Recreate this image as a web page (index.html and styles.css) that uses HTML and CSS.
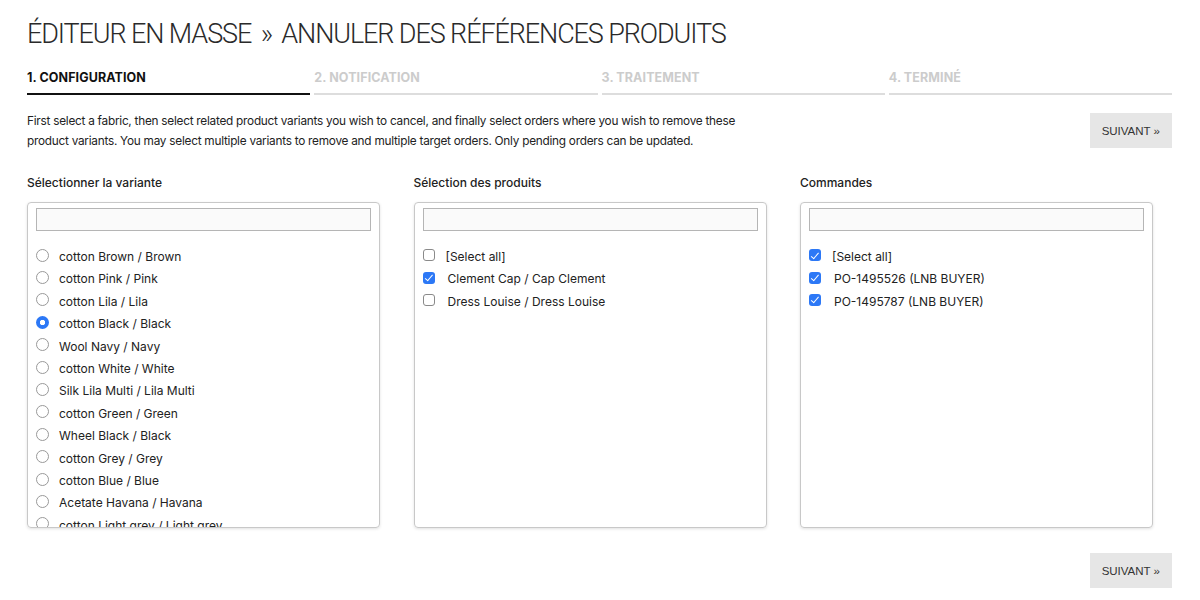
FILE: index.html
```html
<!DOCTYPE html>
<html lang="fr">
<head>
  <meta charset="UTF-8" />
  <meta name="viewport" content="width=device-width, initial-scale=1.0"/>
  <title>Éditeur en masse</title>
  <link rel="stylesheet" href="styles.css">
</head>
<body>
  <div class="page">
    <h1>ÉDITEUR EN MASSE <span class="sep">»</span> ANNULER DES RÉFÉRENCES PRODUITS</h1>

    <div class="steps">
      <div class="step active">1. CONFIGURATION</div>
      <div class="step">2. NOTIFICATION</div>
      <div class="step">3. TRAITEMENT</div>
      <div class="step">4. TERMINÉ</div>
    </div>

    <div class="intro">
      <p>First select a fabric, then select related product variants you wish to cancel, and finally select orders where you wish to remove these product variants. You may select multiple variants to remove and multiple target orders. Only pending orders can be updated.</p>
      <button class="btn">SUIVANT »</button>
    </div>

    <div class="columns">
      <div class="col">
        <div class="col-title">Sélectionner la variante</div>
        <div class="box">
          <input type="text" class="search" />
          <ul class="list">
            <li><label><input type="radio" name="v" /> cotton Brown / Brown</label></li>
            <li><label><input type="radio" name="v" /> cotton Pink / Pink</label></li>
            <li><label><input type="radio" name="v" /> cotton Lila / Lila</label></li>
            <li><label><input type="radio" name="v" checked /> cotton Black / Black</label></li>
            <li><label><input type="radio" name="v" /> Wool Navy / Navy</label></li>
            <li><label><input type="radio" name="v" /> cotton White / White</label></li>
            <li><label><input type="radio" name="v" /> Silk Lila Multi / Lila Multi</label></li>
            <li><label><input type="radio" name="v" /> cotton Green / Green</label></li>
            <li><label><input type="radio" name="v" /> Wheel Black / Black</label></li>
            <li><label><input type="radio" name="v" /> cotton Grey / Grey</label></li>
            <li><label><input type="radio" name="v" /> cotton Blue / Blue</label></li>
            <li><label><input type="radio" name="v" /> Acetate Havana / Havana</label></li>
            <li><label><input type="radio" name="v" /> cotton Light grey / Light grey</label></li>
          </ul>
        </div>
      </div>

      <div class="col">
        <div class="col-title">Sélection des produits</div>
        <div class="box">
          <input type="text" class="search" />
          <ul class="list">
            <li><label><input type="checkbox" /> [Select all]</label></li>
            <li><label><input type="checkbox" checked /> <span class="indent">Clement Cap / Cap Clement</span></label></li>
            <li><label><input type="checkbox" /> <span class="indent">Dress Louise / Dress Louise</span></label></li>
          </ul>
        </div>
      </div>

      <div class="col">
        <div class="col-title">Commandes</div>
        <div class="box">
          <input type="text" class="search" />
          <ul class="list">
            <li><label><input type="checkbox" checked /> [Select all]</label></li>
            <li><label><input type="checkbox" checked /> <span class="indent">PO-1495526 (LNB BUYER)</span></label></li>
            <li><label><input type="checkbox" checked /> <span class="indent">PO-1495787 (LNB BUYER)</span></label></li>
          </ul>
        </div>
      </div>
    </div>

    <div class="footer">
      <button class="btn">SUIVANT »</button>
    </div>
  </div>
</body>
</html>
```

FILE: styles.css
```css
body {
  margin: 0;
  font-family: Inter, "Noto Sans", sans-serif;
  color: #222;
  background: #fff;
}

.page {
  padding: 17px 28px 0 27px;
}

h1 {
  margin: 0;
  font-family: Roboto, Inter, sans-serif;
  font-size: 27px;
  font-weight: 300;
  line-height: 34px;
  color: #2a2a2a;
  letter-spacing: -1.1px;
}

h1 .sep {
  margin: 0 4px;
}

.steps {
  display: grid;
  grid-template-columns: repeat(4, 1fr);
  gap: 4px;
  margin-top: 19px;
}

.step {
  font-size: 12.5px;
  font-weight: 700;
  letter-spacing: 0.1px;
  color: #ccc;
  padding-bottom: 8px;
  border-bottom: 2px solid #ddd;
}

.step.active {
  color: #111;
  border-bottom-color: #111;
}

.intro {
  display: flex;
  justify-content: space-between;
  align-items: flex-start;
  margin-top: 16px;
}

.intro p {
  margin: 0;
  width: 740px;
  font-size: 11.8px;
  letter-spacing: -0.25px;
  line-height: 20px;
}

.btn {
  font-family: "Liberation Sans", Arial, sans-serif;
  font-size: 11.5px;
  color: #333;
  background: #e6e6e6;
  border: none;
  border-radius: 0;
  padding: 0 12px;
  height: 35px;
  margin-top: 2px;
}

.columns {
  display: grid;
  grid-template-columns: repeat(3, 353px);
  column-gap: 33.5px;
  margin-top: 24px;
}

.col-title {
  font-size: 12px;
  font-weight: 500;
  margin-bottom: 12px;
}

.box {
  height: 326px;
  box-sizing: border-box;
  border: 1px solid #c8c8c8;
  border-radius: 4px;
  box-shadow: 0 1px 3px rgba(0,0,0,0.12);
  padding: 5px 8px 0 8px;
  overflow: hidden;
}

.search {
  display: block;
  width: 100%;
  box-sizing: border-box;
  height: 23px;
  border: 1px solid #b5b5b5;
  background: #fafafa;
  margin: 0;
}

.list {
  list-style: none;
  margin: 15px 0 0 0;
  padding: 0;
}

.list li {
  height: 22.4px;
  font-size: 12px;
  line-height: 22.4px;
}

.list label {
  display: flex;
  align-items: center;
}

.list input {
  appearance: none;
  -webkit-appearance: none;
  width: 12px;
  height: 12px;
  margin: 0 11px 0 0;
  box-sizing: border-box;
  border: 1px solid #8a8a8a;
  background: #fff;
  position: relative;
  top: -2px;
  flex: none;
}

.list input[type="radio"] {
  width: 13px;
  height: 13px;
  margin-right: 10px;
  border-color: #999;
  border-radius: 50%;
}

.list input[type="radio"]:checked {
  border: none;
  background: radial-gradient(circle, #fff 0 2.4px, #2c78f6 3px);
}

.list input[type="checkbox"] {
  border-radius: 3px;
}

.list input[type="checkbox"]:checked {
  border: none;
  background: #2c78f6;
}

.list input[type="checkbox"]:checked::after {
  content: "";
  position: absolute;
  left: 4px;
  top: 1.5px;
  width: 3px;
  height: 6.5px;
  border: solid #fff;
  border-width: 0 1.8px 1.8px 0;
  transform: rotate(40deg);
}

.indent {
  margin-left: 2px;
}

.footer {
  display: flex;
  justify-content: flex-end;
  margin-top: 23px;
}
```
